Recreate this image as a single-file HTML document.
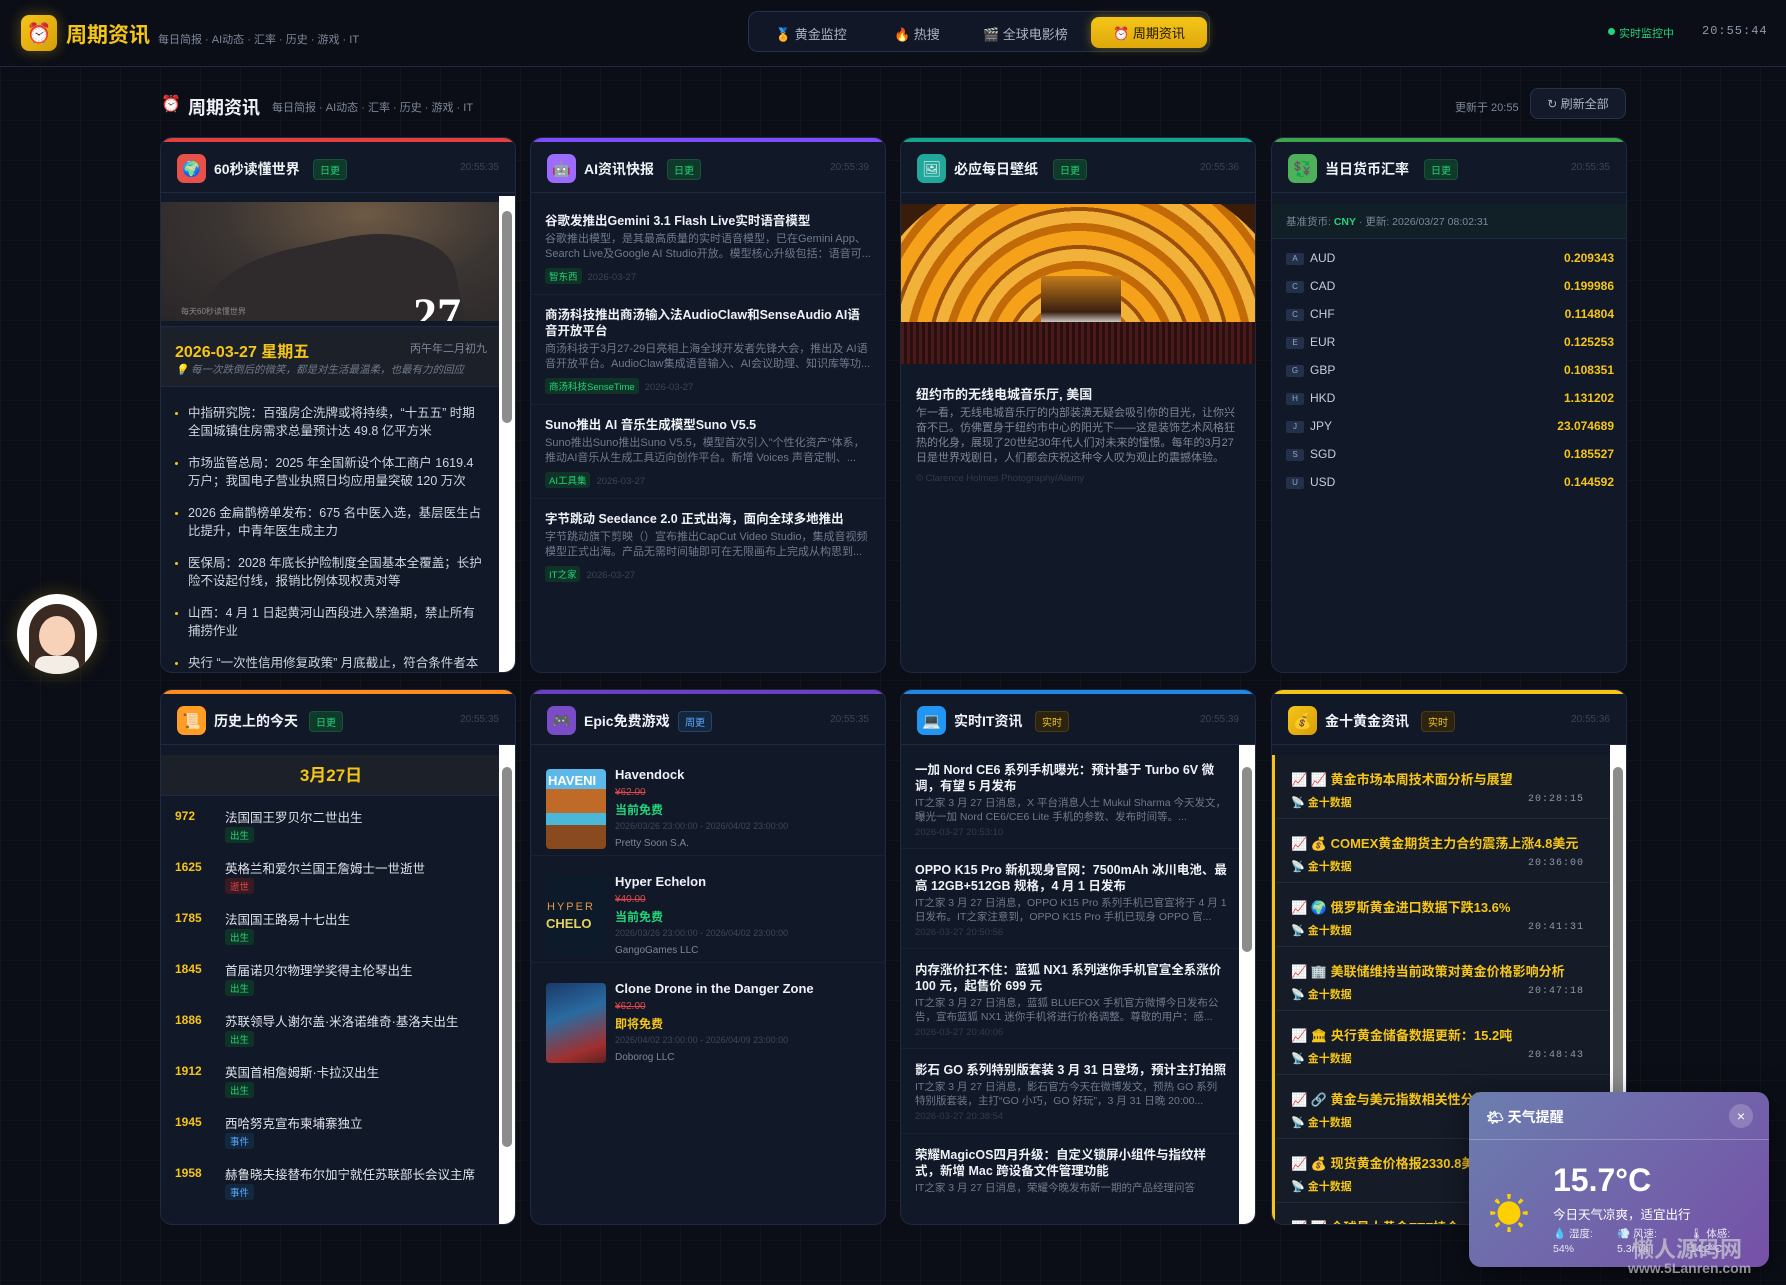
<!DOCTYPE html>
<html><head><meta charset="utf-8">
<style>
*{box-sizing:border-box;margin:0;padding:0}
html,body{width:1786px;height:1285px;overflow:hidden}
body{background:#0b0e16;background-image:linear-gradient(rgba(255,255,255,.025) 1px,transparent 1px),linear-gradient(90deg,rgba(255,255,255,.025) 1px,transparent 1px);background-size:40px 40px;font-family:"Liberation Sans","Noto Sans CJK SC",sans-serif;color:#e5e9f0;position:relative}
.abs{position:absolute}
.hdr{left:0;top:0;width:1786px;height:67px;border-bottom:1px solid #1f2a40;background:#0b0e16}
.logo{left:21px;top:15px;width:36px;height:36px;border-radius:8px;background:linear-gradient(135deg,#f5c518,#d89e0a);box-shadow:0 0 14px rgba(245,197,24,.35);display:flex;align-items:center;justify-content:center;font-size:20px}
.ttl{left:66px;top:19px;font-size:21px;font-weight:bold;color:#f5c518}
.sub{color:#7d8799;font-size:11px}
.nav{left:748px;top:11px;width:462px;height:41px;border:1px solid #25324a;border-radius:10px;background:#111726}
.nav span{position:absolute;top:12px;font-size:13px;color:#aab3c2}
.nav .act{left:342px;top:5px;width:116px;height:31px;border-radius:8px;background:linear-gradient(#f5c518,#e0a80c);color:#1a1300;display:flex;align-items:center;justify-content:center;box-shadow:0 0 10px rgba(245,197,24,.4)}
.card{position:absolute;width:356px;height:536px;background:#111827;border:1px solid #1e2a42;border-radius:12px;overflow:hidden}
.card .bar{height:4px}
.ch{height:51px;border-bottom:1px solid #1e2a42;position:relative}
.ci{position:absolute;left:16px;top:12px;width:29px;height:29px;border-radius:7px;display:flex;align-items:center;justify-content:center;font-size:15px}
.ct{position:absolute;left:53px;top:17px;font-size:14px;font-weight:bold;color:#eef1f6}
.bd{position:absolute;top:17px;font-size:10px;padding:2px 6px;border-radius:4px;background:#0f3a2a;color:#22d37a;border:1px solid #17523a}
.bd.b{background:#13283f;color:#5aa9ff;border-color:#24446a}
.bd.y{background:#2c2410;color:#f5c518;border-color:#4a3b12}
.tm{position:absolute;right:16px;top:20px;font-size:10px;color:#3a4458}
.sb{position:absolute;right:0;width:16px;background:#fff}
.sb i{position:absolute;left:3px;width:10px;border-radius:5px;background:#8c8c8c}
.li{position:relative;padding-left:27px;padding-right:14px;font-size:12.5px;line-height:18px;color:#cfd5df;margin-bottom:14px}
.li:before{content:"";position:absolute;left:14px;top:8px;width:3px;height:3px;border-radius:50%;background:#f5c518}
.ai{padding:12px 14px 0;border-bottom:1px solid #172034}
.ai b{display:block;font-size:12.5px;color:#eef1f6;line-height:16px}
.ai p{font-size:11px;color:#6f7a8d;line-height:15px;margin-top:3px;height:30px;overflow:hidden}
.tag{display:inline-block;font-size:9.5px;padding:1px 4px;border-radius:3px;background:#0f3326;color:#22d37a;margin:6px 0 10px}
.dt{font-size:9.5px;color:#3a4458;margin-left:6px}
.cur{position:relative;height:28px;font-size:12px;color:#c8ced9}
.cur .l{position:absolute;left:14px;top:8px;width:18px;height:12px;background:#22304a;border-radius:2px;font-size:8px;color:#9aa6bb;text-align:center;line-height:12px}
.cur .n{position:absolute;left:38px;top:6px}
.cur .v{position:absolute;right:14px;top:6px;color:#f5c518;font-weight:bold}
.hi{position:relative;height:51px}
.hi .y{position:absolute;left:14px;top:8px;color:#f5c518;font-weight:bold;font-size:12px}
.hi .t{position:absolute;left:64px;top:6px;font-size:12.5px;color:#dfe3ea}
.hi .g{position:absolute;left:64px;top:26px;font-size:9.5px;padding:1px 5px;border-radius:3px;background:#0f3326;color:#22d37a}
.ep{position:relative;height:107px;border-bottom:1px solid #172034}
.ep .th{position:absolute;left:15px;top:20px;width:60px;height:80px;border-radius:4px}
.ep .n{position:absolute;left:84px;top:18px;font-weight:bold;font-size:13px;color:#eef1f6}
.ep .p{position:absolute;left:84px;top:38px;font-size:10px;color:#e0474c;text-decoration:line-through}
.ep .f{position:absolute;left:84px;top:52px;font-size:12px;font-weight:bold;color:#22d37a}
.ep .d{position:absolute;left:84px;top:72px;font-size:9px;color:#3e485a}
.ep .c{position:absolute;left:84px;top:89px;font-size:10px;color:#7d8799}
.it{padding:13px 14px 0;height:100px;border-bottom:1px solid #172034;overflow:hidden}
.it b{display:block;font-size:12.5px;line-height:16px;color:#eef1f6}
.it p{font-size:10.5px;line-height:14px;color:#6f7a8d;margin-top:2px;height:28px;overflow:hidden}
.it s{text-decoration:none;display:block;font-size:9.5px;color:#323c4e;margin-top:3px}
.gd{position:relative;height:64px;border-bottom:1px solid #222a38;background:#151b27}
.gd .t{position:absolute;left:16px;top:14px;font-size:13px;font-weight:bold;color:#f5c518;white-space:nowrap}
.gd .s{position:absolute;left:16px;top:39px;font-size:11px;font-weight:bold;color:#f5c518}
.gd .tt{position:absolute;right:28px;top:39px;font-size:10px;color:#8d98ac;font-family:"Liberation Mono",monospace;letter-spacing:1px}
</style></head><body>
<div class="abs hdr"></div>
<div class="abs logo">⏰</div>
<div class="abs ttl">周期资讯</div>
<div class="abs sub" style="left:158px;top:31px">每日简报 · AI动态 · 汇率 · 历史 · 游戏 · IT</div>
<div class="abs nav">
<span style="left:26px">🏅 黄金监控</span>
<span style="left:145px">🔥 热搜</span>
<span style="left:234px">🎬 全球电影榜</span>
<span class="act">⏰ 周期资讯</span>
</div>
<div class="abs" style="left:1608px;top:28px;width:7px;height:7px;border-radius:50%;background:#22d37a"></div>
<div class="abs" style="left:1619px;top:25px;font-size:11px;color:#22d37a">实时监控中</div>
<div class="abs" style="left:1702px;top:24px;font-size:12px;color:#8d98ac;font-family:'Liberation Mono',monospace;letter-spacing:1px">20:55:44</div>

<div class="abs" style="left:161px;top:94px;font-size:16px">⏰</div>
<div class="abs" style="left:188px;top:94px;font-size:18px;font-weight:bold;color:#eef1f6">周期资讯</div>
<div class="abs sub" style="left:272px;top:99px">每日简报 · AI动态 · 汇率 · 历史 · 游戏 · IT</div>
<div class="abs" style="left:1455px;top:99px;font-size:11px;color:#7d8799">更新于 20:55</div>
<div class="abs" style="left:1530px;top:88px;width:96px;height:31px;border:1px solid #25324a;border-radius:8px;background:#131a2a;font-size:12px;color:#aab3c2;display:flex;align-items:center;justify-content:center">↻ 刷新全部</div>

<!-- Card 1 -->
<div class="card" style="left:160px;top:137px">
<div class="bar" style="background:#e53e3e"></div>
<div class="ch"><div class="ci" style="background:#e8504a">🌍</div><div class="ct">60秒读懂世界</div><div class="bd" style="left:152px">日更</div><div class="tm">20:55:35</div></div>
<div class="abs" style="left:0;top:64px;width:340px;height:119px;background:radial-gradient(ellipse at 60% 10%,#6e5a45,#3a3432 50%,#2a2628);overflow:hidden">
<div class="abs" style="left:40px;top:40px;width:260px;height:140px;background:#2f2a2b;transform:rotate(-12deg);border-radius:40% 40% 0 0"></div>
<div class="abs" style="left:252px;top:86px;font-size:48px;font-weight:bold;color:#fff;font-family:'Liberation Serif',serif">27</div>
<div class="abs" style="left:20px;top:104px;font-size:8px;color:#888">每天60秒读懂世界</div></div>
<div class="abs" style="left:0;top:188px;width:340px;height:61px;background:#1c2028;border-top:1px solid #1e2a42;border-bottom:1px solid #1e2a42">
<div class="abs" style="left:14px;top:11px;font-size:16px;font-weight:bold;color:#f5c518">2026-03-27 星期五</div>
<div class="abs" style="right:14px;top:13px;font-size:11px;color:#7d8799">丙午年二月初九</div>
<div class="abs" style="left:14px;top:35px;font-size:10.5px;font-style:italic;color:#6f7a8d">💡 每一次跌倒后的微笑，都是对生活最温柔，也最有力的回应</div></div>
<div class="abs" style="left:0;top:266px;width:340px">
<div class="li">中指研究院：百强房企洗牌或将持续，“十五五” 时期全国城镇住房需求总量预计达 49.8 亿平方米</div>
<div class="li">市场监管总局：2025 年全国新设个体工商户 1619.4 万户；我国电子营业执照日均应用量突破 120 万次</div>
<div class="li">2026 金扁鹊榜单发布：675 名中医入选，基层医生占比提升，中青年医生成主力</div>
<div class="li">医保局：2028 年底长护险制度全国基本全覆盖；长护险不设起付线，报销比例体现权责对等</div>
<div class="li">山西：4 月 1 日起黄河山西段进入禁渔期，禁止所有捕捞作业</div>
<div class="li">央行 “一次性信用修复政策” 月底截止，符合条件者本月</div></div>
<div class="sb" style="top:58px;height:478px"><i style="top:15px;height:212px"></i></div>
</div>

<!-- Card 2 -->
<div class="card" style="left:530px;top:137px">
<div class="bar" style="background:#7c4dff"></div>
<div class="ch"><div class="ci" style="background:#9b6cff">🤖</div><div class="ct">AI资讯快报</div><div class="bd" style="left:136px">日更</div><div class="tm">20:55:39</div></div>
<div style="padding-top:8px">
<div class="ai"><b>谷歌发推出Gemini 3.1 Flash Live实时语音模型</b><p>谷歌推出模型，是其最高质量的实时语音模型，已在Gemini App、Search Live及Google AI Studio开放。模型核心升级包括：语音可...</p><span class="tag">智东西</span><span class="dt">2026-03-27</span></div>
<div class="ai"><b>商汤科技推出商汤输入法AudioClaw和SenseAudio AI语音开放平台</b><p>商汤科技于3月27-29日亮相上海全球开发者先锋大会，推出及 AI语音开放平台。AudioClaw集成语音输入、AI会议助理、知识库等功...</p><span class="tag">商汤科技SenseTime</span><span class="dt">2026-03-27</span></div>
<div class="ai"><b>Suno推出 AI 音乐生成模型Suno V5.5</b><p>Suno推出Suno推出Suno V5.5，模型首次引入"个性化资产"体系，推动AI音乐从生成工具迈向创作平台。新增 Voices 声音定制、...</p><span class="tag">AI工具集</span><span class="dt">2026-03-27</span></div>
<div class="ai" style="border:0"><b>字节跳动 Seedance 2.0 正式出海，面向全球多地推出</b><p>字节跳动旗下剪映（）宣布推出CapCut Video Studio，集成音视频模型正式出海。产品无需时间轴即可在无限画布上完成从构思到...</p><span class="tag">IT之家</span><span class="dt">2026-03-27</span></div>
</div></div>

<!-- Card 3 -->
<div class="card" style="left:900px;top:137px">
<div class="bar" style="background:#14a38b"></div>
<div class="ch"><div class="ci" style="background:#20a89a">🖼</div><div class="ct">必应每日壁纸</div><div class="bd" style="left:152px">日更</div><div class="tm">20:55:36</div></div>
<div class="abs" style="left:0;top:66px;width:356px;height:160px;overflow:hidden;background:#3a1c0a">
<div class="abs" style="left:-30px;top:-40px;width:416px;height:300px;border-radius:50%;background:repeating-radial-gradient(circle at 50% 65%,#f6a11a 0 14px,#c26a08 14px 22px,#f2b23a 22px 34px,#9a4f0a 34px 38px)"></div>
<div class="abs" style="left:140px;top:72px;width:80px;height:60px;background:linear-gradient(#c27a1a,#3a2010 60%,#e8e8e8 80%,#222)"></div>
<div class="abs" style="left:0;top:118px;width:356px;height:42px;background:repeating-linear-gradient(90deg,#4a1a1a 0 3px,#2a0f10 3px 6px)"></div></div>
<div class="abs" style="left:15px;top:246px;font-size:13px;font-weight:bold;color:#eef1f6">纽约市的无线电城音乐厅, 美国</div>
<div class="abs" style="left:15px;top:268px;width:326px;font-size:11px;line-height:15px;color:#7d8799">乍一看，无线电城音乐厅的内部装潢无疑会吸引你的目光，让你兴奋不已。仿佛置身于纽约市中心的阳光下——这是装饰艺术风格狂热的化身，展现了20世纪30年代人们对未来的憧憬。每年的3月27日是世界戏剧日，人们都会庆祝这种令人叹为观止的震撼体验。</div>
<div class="abs" style="left:15px;top:335px;font-size:9.5px;color:#323c4e">© Clarence Holmes Photography/Alamy</div>
</div>

<!-- Card 4 -->
<div class="card" style="left:1271px;top:137px">
<div class="bar" style="background:#3fa44a"></div>
<div class="ch"><div class="ci" style="background:#4fb05c">💱</div><div class="ct">当日货币汇率</div><div class="bd" style="left:152px">日更</div><div class="tm">20:55:35</div></div>
<div class="abs" style="left:0;top:66px;width:356px;height:35px;background:#111f27;border-bottom:1px solid #1e2a42;font-size:10.5px;color:#7d8799;padding:10px 14px">基准货币: <b style="color:#22d37a">CNY</b> · 更新: 2026/03/27 08:02:31</div>
<div class="abs" style="left:0;top:107px;width:356px">
<div class="cur"><span class="l">A</span><span class="n">AUD</span><span class="v">0.209343</span></div>
<div class="cur"><span class="l">C</span><span class="n">CAD</span><span class="v">0.199986</span></div>
<div class="cur"><span class="l">C</span><span class="n">CHF</span><span class="v">0.114804</span></div>
<div class="cur"><span class="l">E</span><span class="n">EUR</span><span class="v">0.125253</span></div>
<div class="cur"><span class="l">G</span><span class="n">GBP</span><span class="v">0.108351</span></div>
<div class="cur"><span class="l">H</span><span class="n">HKD</span><span class="v">1.131202</span></div>
<div class="cur"><span class="l">J</span><span class="n">JPY</span><span class="v">23.074689</span></div>
<div class="cur"><span class="l">S</span><span class="n">SGD</span><span class="v">0.185527</span></div>
<div class="cur"><span class="l">U</span><span class="n">USD</span><span class="v">0.144592</span></div></div>
</div>

<!-- Card 5 -->
<div class="card" style="left:160px;top:689px">
<div class="bar" style="background:#ff8c1a"></div>
<div class="ch"><div class="ci" style="background:#ff9d24">📜</div><div class="ct">历史上的今天</div><div class="bd" style="left:148px">日更</div><div class="tm">20:55:35</div></div>
<div class="abs" style="left:0;top:65px;width:340px;height:41px;background:#1c2028;border-bottom:1px solid #1e2a42;text-align:center;font-size:17px;font-weight:bold;color:#f5c518;line-height:41px">3月27日</div>
<div class="abs" style="left:0;top:111px;width:340px">
<div class="hi"><span class="y">972</span><span class="t">法国国王罗贝尔二世出生</span><span class="g">出生</span></div>
<div class="hi"><span class="y">1625</span><span class="t">英格兰和爱尔兰国王詹姆士一世逝世</span><span class="g" style="background:#3a1a22;color:#e0474c">逝世</span></div>
<div class="hi"><span class="y">1785</span><span class="t">法国国王路易十七出生</span><span class="g">出生</span></div>
<div class="hi"><span class="y">1845</span><span class="t">首届诺贝尔物理学奖得主伦琴出生</span><span class="g">出生</span></div>
<div class="hi"><span class="y">1886</span><span class="t">苏联领导人谢尔盖·米洛诺维奇·基洛夫出生</span><span class="g">出生</span></div>
<div class="hi"><span class="y">1912</span><span class="t">英国首相詹姆斯·卡拉汉出生</span><span class="g">出生</span></div>
<div class="hi"><span class="y">1945</span><span class="t">西哈努克宣布柬埔寨独立</span><span class="g" style="background:#13283f;color:#5aa9ff">事件</span></div>
<div class="hi"><span class="y">1958</span><span class="t">赫鲁晓夫接替布尔加宁就任苏联部长会议主席</span><span class="g" style="background:#13283f;color:#5aa9ff">事件</span></div></div>
<div class="sb" style="top:55px;height:481px"><i style="top:22px;height:380px"></i></div>
</div>

<!-- Card 6 -->
<div class="card" style="left:530px;top:689px">
<div class="bar" style="background:#6b3fc0"></div>
<div class="ch"><div class="ci" style="background:#7a4cc7">🎮</div><div class="ct">Epic免费游戏</div><div class="bd b" style="left:147px">周更</div><div class="tm">20:55:35</div></div>
<div style="padding-top:4px">
<div class="ep"><div class="th" style="background:linear-gradient(#5cb8e8 0 25%,#c06a2a 25% 55%,#4ab8d8 55% 70%,#8a4a20 70%)"></div><div class="abs" style="left:17px;top:24px;font-size:13px;font-weight:bold;color:#fff">HAVENI</div><div class="n">Havendock</div><div class="p">¥62.00</div><div class="f">当前免费</div><div class="d">2026/03/26 23:00:00 - 2026/04/02 23:00:00</div><div class="c">Pretty Soon S.A.</div></div>
<div class="ep"><div class="th" style="background:#0c1a2a"></div><div class="abs" style="left:16px;top:45px;font-size:11px;color:#e8944a;letter-spacing:2px">HYPER</div><div class="abs" style="left:15px;top:60px;font-size:13px;font-weight:bold;color:#e8d060">CHELO</div><div class="n">Hyper Echelon</div><div class="p">¥40.00</div><div class="f">当前免费</div><div class="d">2026/03/26 23:00:00 - 2026/04/02 23:00:00</div><div class="c">GangoGames LLC</div></div>
<div class="ep" style="border:0"><div class="th" style="background:linear-gradient(160deg,#1a3a6a,#2a6aa0 40%,#a03030 80%,#602020)"></div><div class="n">Clone Drone in the Danger Zone</div><div class="p">¥62.00</div><div class="f" style="color:#f5c518">即将免费</div><div class="d">2026/04/02 23:00:00 - 2026/04/09 23:00:00</div><div class="c">Doborog LLC</div></div>
</div></div>

<!-- Card 7 -->
<div class="card" style="left:900px;top:689px">
<div class="bar" style="background:#1e88e5"></div>
<div class="ch"><div class="ci" style="background:#2196f3">💻</div><div class="ct">实时IT资讯</div><div class="bd y" style="left:134px">实时</div><div class="tm">20:55:39</div></div>
<div style="padding-top:4px;width:340px">
<div class="it"><b>一加 Nord CE6 系列手机曝光：预计基于 Turbo 6V 微调，有望 5 月发布</b><p>IT之家 3 月 27 日消息，X 平台消息人士 Mukul Sharma 今天发文，曝光一加 Nord CE6/CE6 Lite 手机的参数、发布时间等。...</p><s>2026-03-27 20:53:10</s></div>
<div class="it"><b>OPPO K15 Pro 新机现身官网：7500mAh 冰川电池、最高 12GB+512GB 规格，4 月 1 日发布</b><p>IT之家 3 月 27 日消息，OPPO K15 Pro 系列手机已官宣将于 4 月 1 日发布。IT之家注意到，OPPO K15 Pro 手机已现身 OPPO 官...</p><s>2026-03-27 20:50:56</s></div>
<div class="it"><b>内存涨价扛不住：蓝狐 NX1 系列迷你手机官宣全系涨价 100 元，起售价 699 元</b><p>IT之家 3 月 27 日消息，蓝狐 BLUEFOX 手机官方微博今日发布公告，宣布蓝狐 NX1 迷你手机将进行价格调整。尊敬的用户：感...</p><s>2026-03-27 20:40:06</s></div>
<div class="it" style="height:85px"><b>影石 GO 系列特别版套装 3 月 31 日登场，预计主打拍照</b><p>IT之家 3 月 27 日消息，影石官方今天在微博发文，预热 GO 系列特别版套装，主打“GO 小巧，GO 好玩”，3 月 31 日晚 20:00...</p><s>2026-03-27 20:38:54</s></div>
<div class="it" style="border:0"><b>荣耀MagicOS四月升级：自定义锁屏小组件与指纹样式，新增 Mac 跨设备文件管理功能</b><p>IT之家 3 月 27 日消息，荣耀今晚发布新一期的产品经理问答</p></div>
</div>
<div class="sb" style="top:55px;height:481px"><i style="top:22px;height:185px"></i></div>
</div>

<!-- Card 8 -->
<div class="card" style="left:1271px;top:689px">
<div class="bar" style="background:#f5c518"></div>
<div class="ch"><div class="ci" style="background:linear-gradient(135deg,#f5c518,#d89e0a)">💰</div><div class="ct">金十黄金资讯</div><div class="bd y" style="left:149px">实时</div><div class="tm">20:55:36</div></div>
<div class="abs" style="left:0;top:65px;width:340px;border-left:3px solid #f5c518">
<div class="gd"><span class="t">📈 📈 黄金市场本周技术面分析与展望</span><span class="s">📡 金十数据</span><span class="tt">20:28:15</span></div>
<div class="gd"><span class="t">📈 💰 COMEX黄金期货主力合约震荡上涨4.8美元</span><span class="s">📡 金十数据</span><span class="tt">20:36:00</span></div>
<div class="gd"><span class="t">📈 🌍 俄罗斯黄金进口数据下跌13.6%</span><span class="s">📡 金十数据</span><span class="tt">20:41:31</span></div>
<div class="gd"><span class="t">📈 🏢 美联储维持当前政策对黄金价格影响分析</span><span class="s">📡 金十数据</span><span class="tt">20:47:18</span></div>
<div class="gd"><span class="t">📈 🏛 央行黄金储备数据更新：15.2吨</span><span class="s">📡 金十数据</span><span class="tt">20:48:43</span></div>
<div class="gd"><span class="t">📈 🔗 黄金与美元指数相关性分析</span><span class="s">📡 金十数据</span><span class="tt">20:50:02</span></div>
<div class="gd"><span class="t">📈 💰 现货黄金价格报2330.8美元</span><span class="s">📡 金十数据</span><span class="tt">20:52:10</span></div>
<div class="gd"><span class="t">📈 📈 全球最大黄金ETF持仓</span></div>
</div>
<div class="sb" style="top:55px;height:481px"><i style="top:22px;height:400px"></i></div>
</div>

<!-- avatar -->
<div class="abs" style="left:17px;top:594px;width:80px;height:80px;border-radius:50%;background:#fff;box-shadow:0 0 18px rgba(245,197,24,.25);overflow:hidden">
<div class="abs" style="left:12px;top:10px;width:56px;height:70px;border-radius:28px 28px 8px 8px;background:#3a2a22"></div>
<div class="abs" style="left:22px;top:22px;width:36px;height:40px;border-radius:50%;background:#f7d2b8"></div>
<div class="abs" style="left:18px;top:62px;width:44px;height:20px;border-radius:10px 10px 0 0;background:#f4ede6"></div></div>

<!-- weather -->
<div class="abs" style="left:1469px;top:1092px;width:300px;height:175px;border-radius:12px;background:linear-gradient(135deg,#6b7eae,#7650a8);box-shadow:0 8px 30px rgba(0,0,0,.5);overflow:hidden">
<div class="abs" style="left:0;top:0;width:300px;height:48px;border-bottom:1px solid rgba(255,255,255,.25)"></div>
<div class="abs" style="left:17px;top:15px;font-size:14px;font-weight:bold;color:#fff">🌤 天气提醒</div>
<div class="abs" style="left:260px;top:12px;width:24px;height:24px;border-radius:50%;background:rgba(255,255,255,.2);color:#fff;font-size:14px;text-align:center;line-height:24px">×</div>
<div class="abs" style="left:20px;top:90px;font-size:40px;color:#ffd000">☀</div>
<div class="abs" style="left:84px;top:70px;font-size:32px;font-weight:bold;color:#fff">15.7°C</div>
<div class="abs" style="left:84px;top:112px;font-size:12.5px;color:#fff">今日天气凉爽，适宜出行</div>
<div class="abs" style="left:84px;top:135px;font-size:10.5px;color:#e8e8f5;line-height:15px">💧 湿度:<br>54%</div>
<div class="abs" style="left:148px;top:135px;font-size:10.5px;color:#e8e8f5;line-height:15px">💨 风速:<br>5.3m/s</div>
<div class="abs" style="left:221px;top:135px;font-size:10.5px;color:#e8e8f5;line-height:15px">🌡 体感:<br>14.2°C</div>
</div>
<div class="abs" style="left:1632px;top:1232px;font-size:22px;font-weight:bold;color:rgba(200,200,210,.75)">懒人源码网</div>
<div class="abs" style="left:1628px;top:1260px;font-size:14px;font-weight:bold;color:rgba(200,200,210,.7)">www.5Lanren.com</div>
</body></html>
